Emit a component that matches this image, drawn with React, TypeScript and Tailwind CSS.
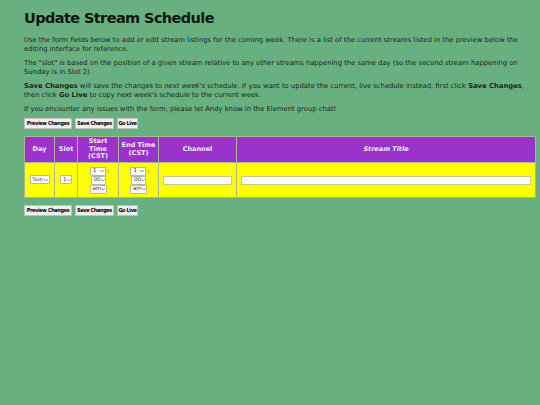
import React from "react";

const Sel = ({ label, w }: { label: string; w: string }) => (
  <span
    className={`inline-flex items-center justify-between bg-white border border-[#b8b8a0] rounded-[1px] h-[9px] pl-[2px] pr-[1px] text-[5.5px] leading-none text-[#333] whitespace-nowrap ${w}`}
  >
    <span>{label}</span>
    <svg width="4" height="4" viewBox="0 0 10 8" className="shrink-0">
      <path d="M1 2 L5 6 L9 2" stroke="#444" strokeWidth="1.8" fill="none" />
    </svg>
  </span>
);

const Buttons = () => (
  <div className="flex gap-[3px]">
    {[
      ["Preview Changes", "w-[48px]"],
      ["Save Changes", "w-[39px]"],
      ["Go Live", "w-[21px]"],
    ].map(([t, w]) => (
      <span
        key={t}
        className={`bg-[#efefef] border border-[#c0c0c0] h-[11px] flex items-center justify-center text-[5.5px] font-bold text-black tracking-[-0.35px] leading-none whitespace-nowrap ${w}`}
        style={{ fontFamily: '"DejaVu Sans Condensed", "DejaVu Sans", sans-serif', fontStretch: "condensed" }}
      >
        {t}
      </span>
    ))}
  </div>
);

const TimeCell = () => (
  <div className="flex flex-col items-center">
    <div className="flex items-center pl-[3px]">
      <Sel label="1" w="w-[16px]" />
      <span className="text-[6px] leading-none ml-[1px] text-[#333]">:</span>
    </div>
    <Sel label="00" w="w-[15px]" />
    <Sel label="am" w="w-[17px]" />
  </div>
);

export default function App() {
  return (
    <div
      className="w-[540px] h-[405px] bg-[#69b081] text-[#111] pl-[24px] pr-[4px] pt-[8px]"
      style={{ fontFamily: '"DejaVu Sans", Verdana, sans-serif' }}
    >
      <h1 className="text-[14.5px] font-bold leading-[20px] tracking-[-0.6px] text-[#0d150d]">Update Stream Schedule</h1>
      <div className="text-[6.8px] leading-[9px] text-[#1a261a] mt-[8px] flex flex-col gap-[5px]">
        <p>
          Use the form fields below to add or edit stream listings for the coming week. There is a list of the current streams listed in the preview below the editing interface for reference.
        </p>
        <p>
          The "slot" is based on the position of a given stream relative to any other streams happening the same day (so the second stream happening on Sunday is in Slot 2).
        </p>
        <p>
          <b>Save Changes</b> will save the changes to <i>next week's</i> schedule. If you want to update the current, live schedule instead, first click <b>Save Changes</b>, then click <b>Go Live</b> to copy next week's schedule to the current week.
        </p>
        <p>If you encounter any issues with the form, please let Andy know in the Element group chat!</p>
      </div>
      <div className="mt-[4px]">
        <Buttons />
      </div>
      <table className="mt-[7px] w-[512px] border-collapse border border-[#9fbf6f] text-[6.5px]">
        <thead>
          <tr className="bg-[#9933cc] text-[#f4e8f4] font-bold h-[26px] leading-[7.5px]">
            <th className="border border-[#a8b890] w-[30px]">Day</th>
            <th className="border border-[#a8b890] w-[23px]">Slot</th>
            <th className="border border-[#a8b890] w-[41px]">
              Start
              <br />
              Time
              <br />
              (CST)
            </th>
            <th className="border border-[#a8b890] w-[40px]">
              End Time
              <br />
              (CST)
            </th>
            <th className="border border-[#a8b890] w-[78px]">Channel</th>
            <th className="border border-[#a8b890] italic">Stream Title</th>
          </tr>
        </thead>
        <tbody>
          <tr className="bg-[#ffff00] h-[35px]">
            <td className="border border-[#a8b890] text-center">
              <Sel label="Sun" w="w-[20px]" />
            </td>
            <td className="border border-[#a8b890] text-center">
              <Sel label="1" w="w-[12px]" />
            </td>
            <td className="border border-[#a8b890]">
              <TimeCell />
            </td>
            <td className="border border-[#a8b890]">
              <TimeCell />
            </td>
            <td className="border border-[#a8b890] px-[4px]">
              <div className="h-[9px] bg-white border border-[#c8c890]" />
            </td>
            <td className="border border-[#a8b890] px-[4px]">
              <div className="h-[9px] bg-white border border-[#c8c890]" />
            </td>
          </tr>
        </tbody>
      </table>
      <div className="mt-[7px]">
        <Buttons />
      </div>
    </div>
  );
}
